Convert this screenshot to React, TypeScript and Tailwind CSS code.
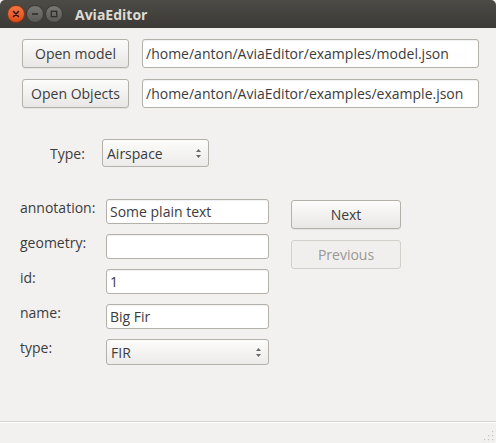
import React from 'react';

const font = { fontFamily: '"Open Sans", "Noto Sans", "DejaVu Sans", sans-serif' };

const Button = ({ label, disabled, className }: { label: string; disabled?: boolean; className?: string }) => (
  <button
    disabled={disabled}
    className={`flex items-center justify-center rounded-[3px] border text-[14px] ${
      disabled
        ? 'border-[#d3d0cb] bg-[#f0efed] text-[#9a9893]'
        : 'border-[#b4b0aa] bg-gradient-to-b from-[#fcfcfb] to-[#e8e7e5] text-[#3c3c3c] shadow-[0_1px_0_rgba(0,0,0,0.05)]'
    } ${className ?? ''}`}
  >
    {label}
  </button>
);

const Field = ({ value, className }: { value: string; className?: string }) => (
  <div
    className={`flex items-center rounded-[3px] border border-[#b4b0aa] bg-white px-[3px] text-[14px] text-[#3c3c3c] shadow-[inset_0_1px_1px_rgba(0,0,0,0.06)] ${className ?? ''}`}
  >
    <span className="whitespace-nowrap">{value}</span>
  </div>
);

const Spin = () => (
  <svg width="7" height="11" viewBox="0 0 7 11" className="shrink-0">
    <path d="M3.5 1 L6 4 L1 4 Z" fill="#6b6964" />
    <path d="M3.5 10 L6 7 L1 7 Z" fill="#6b6964" />
  </svg>
);

const Combo = ({ value, className }: { value: string; className?: string }) => (
  <div
    className={`flex items-center justify-between rounded-[3px] border border-[#b4b0aa] bg-gradient-to-b from-[#fcfcfb] to-[#ecebe9] pl-[4px] pr-[6px] text-[14px] text-[#3c3c3c] ${className ?? ''}`}
  >
    <span>{value}</span>
    <Spin />
  </div>
);

const TitleButton = ({ kind }: { kind: 'close' | 'min' | 'max' }) => (
  <div
    className={`flex h-[18px] w-[18px] items-center justify-center rounded-full border ${
      kind === 'close'
        ? 'border-[#8f3214] bg-gradient-to-b from-[#f07746] to-[#df4a16]'
        : 'border-[#3a3935] bg-gradient-to-b from-[#7a7873] to-[#5a5954]'
    }`}
  >
    <svg width="10" height="10" viewBox="0 0 10 10">
      {kind === 'close' && (
        <path d="M2.5 2.5 L7.5 7.5 M7.5 2.5 L2.5 7.5" stroke="#3b1508" strokeWidth="1.6" strokeLinecap="round" />
      )}
      {kind === 'min' && <path d="M2 5 L8 5" stroke="#2f2e2b" strokeWidth="1.6" />}
      {kind === 'max' && <rect x="2.3" y="2.3" width="5.4" height="5.4" fill="none" stroke="#2f2e2b" strokeWidth="1.3" />}
    </svg>
  </div>
);

const rows: { label: string; value?: string; combo?: boolean }[] = [
  { label: 'annotation:', value: 'Some plain text' },
  { label: 'geometry:', value: '' },
  { label: 'id:', value: '1' },
  { label: 'name:', value: 'Big Fir' },
  { label: 'type:', value: 'FIR', combo: true },
];

export default function App() {
  return (
    <div className="flex h-[443px] w-[496px] flex-col bg-[#f2f1f0] text-[#3c3c3c]" style={font}>
      {/* Title bar */}
      <div className="flex h-[28px] shrink-0 items-center rounded-t-[5px] bg-gradient-to-b from-[#4c4b46] to-[#3b3a36] pl-[7px]">
        <div className="flex gap-[1px]">
          <TitleButton kind="close" />
          <TitleButton kind="min" />
          <TitleButton kind="max" />
        </div>
        <span className="ml-[12px] text-[14px] font-bold text-[#dfdbd2]">AviaEditor</span>
      </div>

      {/* Content */}
      <div className="flex flex-1 flex-col pt-[11px]">
        <div className="flex flex-col gap-[11px] pl-[22px]">
          <div className="flex gap-[13px]">
            <Button label="Open model" className="h-[29px] w-[107px]" />
            <Field value="/home/anton/AviaEditor/examples/model.json" className="h-[29px] w-[337px]" />
          </div>
          <div className="flex gap-[13px]">
            <Button label="Open Objects" className="h-[29px] w-[107px]" />
            <Field value="/home/anton/AviaEditor/examples/example.json" className="h-[29px] w-[337px]" />
          </div>
        </div>

        <div className="mt-[31px] flex items-center pl-[50px]">
          <span className="w-[52px] text-[14px]">Type:</span>
          <Combo value="Airspace" className="h-[28px] w-[107px]" />
        </div>

        <div className="mt-[32px] flex pl-[20px]">
          <div className="flex flex-col gap-[10px]">
            {rows.map((r) => (
              <div key={r.label} className="flex items-start">
                <span className="w-[86px] text-[14px] leading-[18px]">{r.label}</span>
                {r.combo ? (
                  <Combo value={r.value ?? ''} className="h-[26px] w-[163px]" />
                ) : (
                  <Field value={r.value ?? ''} className="h-[25px] w-[163px]" />
                )}
              </div>
            ))}
          </div>
          <div className="ml-[22px] flex flex-col gap-[11px] pt-[1px]">
            <Button label="Next" className="h-[29px] w-[110px]" />
            <Button label="Previous" disabled className="h-[29px] w-[110px]" />
          </div>
        </div>
      </div>

      {/* Status bar */}
      <div className="flex h-[22px] shrink-0 items-end justify-end border-t border-[#d6d4d0] pb-[2px] pr-[2px] shadow-[inset_0_1px_0_#ffffff]">
        <svg width="11" height="11" viewBox="0 0 11 11">
          {[
            [9, 1],
            [9, 5],
            [5, 5],
            [9, 9],
            [5, 9],
            [1, 9],
          ].map(([x, y]) => (
            <rect key={`${x}-${y}`} x={x} y={y} width="1.2" height="1.2" fill="#c4c1bb" />
          ))}
        </svg>
      </div>
    </div>
  );
}
